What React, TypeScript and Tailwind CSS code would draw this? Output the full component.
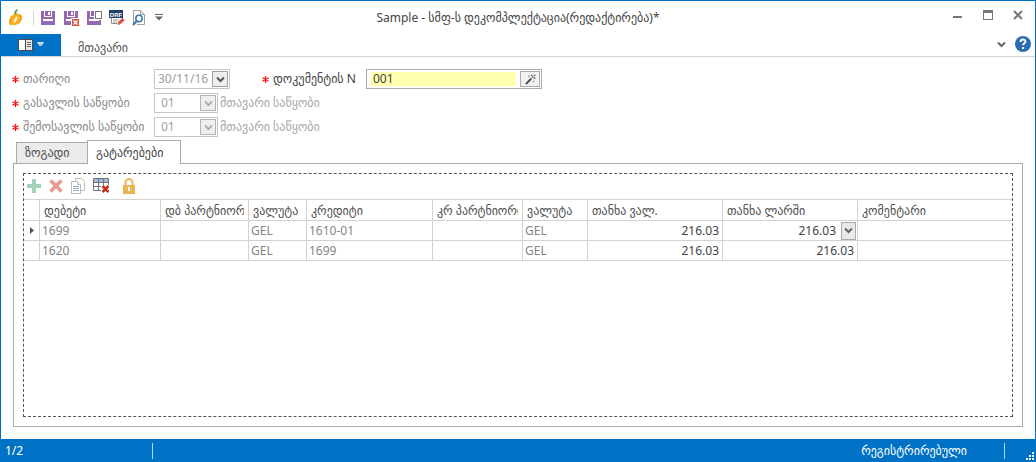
import type { ReactNode } from "react";

type Row = { debit: string; credit: string; amount: string; local: string; active?: boolean };

const rows: Row[] = [
  { debit: "1699", credit: "1610-01", amount: "216.03", local: "216.03", active: true },
  { debit: "1620", credit: "1699", amount: "216.03", local: "216.03" },
];

const columns = [
  "დებეტი",
  "დბ პარტნიორი",
  "ვალუტა",
  "კრედიტი",
  "კრ პარტნიორი",
  "ვალუტა",
  "თანხა ვალ.",
  "თანხა ლარში",
  "კომენტარი",
];

function Chevron({ className = "" }: { className?: string }) {
  return (
    <svg viewBox="0 0 9 7" className={`h-[7px] w-[9px] ${className}`} fill="none" stroke="currentColor" strokeWidth="2">
      <path d="M1 1.500 L4.500 5 L8 1.500" />
    </svg>
  );
}

function SaveIcon({ variant }: { variant?: "close" | "new" }) {
  return (
    <svg viewBox="0 0 16 16" className="size-4" shapeRendering="crispEdges">
      <path d="M1 1h14v14H1z" fill="#9468b0" />
      <path d="M4 1h8v6H4z" fill="#fff" />
      <path d="M5 1h6v5H5z" fill="#9468b0" />
      <path d="M8 2h2v3H8z" fill="#fff" />
      <path d="M3 9h10v2H3z" fill="#fff" />
      {variant === "close" && (
        <>
          <path d="M8 8h8v8H8z" fill="#fff" />
          <path d="M9 9h7v7H9z" fill="#d9553f" />
          <path d="M10.500 10.500l4 4M14.500 10.500l-4 4" stroke="#fff" strokeWidth="1.3" shapeRendering="auto" />
        </>
      )}
      {variant === "new" && (
        <>
          <path d="M8 0h8v10H8z" fill="#fff" />
          <path d="M9.500 1.500h6v7h-6z" fill="#fff" stroke="#777" />
        </>
      )}
    </svg>
  );
}

function LogoIcon() {
  return (
    <svg viewBox="0 0 14 17" className="h-[17px] w-[14px]">
      <path d="M6 5C3 5 1 9 1 13c0 3 3 3.500 5.500 3C10.500 15 13 11 13 8c0-3-4-4-7-3z" fill="#fbb11c" />
      <path d="M8 7.500c-2 1-3.200 3.600-3 6 2-.6 3.700-3 3-6z" fill="#fff" />
      <path d="M3 7C1 10 0 14 2 16M11 6c2 2 1 6-2 8.500" fill="none" stroke="#f59b13" strokeWidth="1.500" />
      <path d="M5 5.500C5 3 6 1 8 0l.8 1.500C7.500 2.500 7.300 3.500 7.500 5z" fill="#54a447" />
    </svg>
  );
}

function DraftIcon() {
  return (
    <svg viewBox="0 0 16 16" className="size-4">
      <path d="M2.500 7v6.500h6M13.500 7v3" fill="none" stroke="#8b8b8b" />
      <path d="M4 10h6M4 12h4" stroke="#999" />
      <path d="M0 0h14v8H0z" fill="#1d4167" />
      <text x="7" y="6.500" textAnchor="middle" fontSize="6" fontWeight="700" fill="#fff" fontFamily="Liberation Sans, sans-serif">DRF</text>
      <path d="M8 15l1-3 4.500-4 2.300 2.300L11 14.500z" fill="#d9553f" />
      <path d="M8 15l.7-2.300 1.600 1.600z" fill="#e9c99a" />
    </svg>
  );
}

function PreviewIcon() {
  return (
    <svg viewBox="0 0 14 16" className="h-4 w-[14px]" fill="none">
      <path d="M1.500 14.500v-14h7l4 4v10H5" stroke="#a0a0a0" />
      <path d="M8.500.5v4h4" stroke="#a0a0a0" />
      <circle cx="7" cy="8.500" r="3.200" fill="#fff" stroke="#3678b2" strokeWidth="1.500" />
      <path d="M4.700 11L1 15" stroke="#3678b2" strokeWidth="2" />
    </svg>
  );
}

function IconButton({ label, className = "", children }: { label: string; className?: string; children: ReactNode }) {
  return (
    <button type="button" aria-label={label} className={`flex items-center justify-center ${className}`}>
      {children}
    </button>
  );
}

function TitleBar() {
  return (
    <header className="grid h-[33px] grid-cols-[1fr_auto_1fr] items-center">
      <div className="flex items-center pl-2">
        <LogoIcon />
        <span className="mr-[6px] ml-[10px] h-[14px] w-px bg-[#d5d5d5]" />
        <div className="flex items-center gap-[7px]">
          <IconButton label="Save"><SaveIcon /></IconButton>
          <IconButton label="Save and close"><SaveIcon variant="close" /></IconButton>
          <IconButton label="Save and new"><SaveIcon variant="new" /></IconButton>
          <IconButton label="Draft"><DraftIcon /></IconButton>
          <IconButton label="Preview"><PreviewIcon /></IconButton>
          <IconButton label="Customize" className="ml-[2px]">
            <svg viewBox="0 0 8 7" className="h-[7px] w-2" fill="#666">
              <path d="M0 0h8v1H0zM0 2.500h8L4 6.500z" />
            </svg>
          </IconButton>
        </div>
      </div>
      <h1 className="text-[12px] text-[#444]">Sample - სმფ-ს დეკომპლექტაცია(რედაქტირება)*</h1>
      <div className="flex items-center justify-end gap-5 pr-3 pb-[6px] text-[#777]">
        <IconButton label="Minimize">
          <svg viewBox="0 0 10 10" className="size-[10px]"><path d="M0 6h9v2H0z" fill="currentColor" /></svg>
        </IconButton>
        <IconButton label="Maximize">
          <svg viewBox="0 0 10 10" className="size-[10px]" shapeRendering="crispEdges">
            <path d="M.5.5h9v9h-9z" fill="none" stroke="currentColor" /><path d="M0 0h10v3H0z" fill="currentColor" />
          </svg>
        </IconButton>
        <IconButton label="Close">
          <svg viewBox="0 0 10 10" className="size-[10px]"><path d="M1 1l8 8M9 1l-8 8" stroke="currentColor" strokeWidth="2" /></svg>
        </IconButton>
      </div>
    </header>
  );
}

function RibbonBar() {
  return (
    <nav className="flex h-[23px] items-stretch border-b border-[#d4d4d4]">
      <button type="button" aria-label="Application menu" className="flex w-[60px] items-center justify-center gap-1 bg-[#0072c6] pb-px text-white">
        <svg viewBox="0 0 15 12" className="h-3 w-[15px]" shapeRendering="crispEdges">
          <path d="M0 0h15v12H0z" fill="#4d4d4d" />
          <path d="M1 1h6v10H1z" fill="#fff" />
          <path d="M8 1h6v10H8z" fill="#e6e6e6" />
          <path d="M9 3h4v1H9zM9 5h4v1H9zM9 7h4v1H9z" fill="#666" />
        </svg>
        <svg viewBox="0 0 7 5" className="h-[5px] w-[7px]"><path d="M.7.7h5.600L3.500 4z" fill="#7fb9e3" stroke="#fff" /></svg>
      </button>
      <a href="#main" className="flex items-center px-[17px] pt-[6px] text-[12px] text-[#555]">მთავარი</a>
      <div className="ml-auto flex items-center gap-[9px] pr-1 pb-[2px] text-[#666]">
        <IconButton label="Collapse"><Chevron /></IconButton>
        <IconButton label="Help">
          <svg viewBox="0 0 16 16" className="size-4">
            <circle cx="8" cy="8" r="8" fill="#2a6db4" />
            <path d="M5.500 6c0-3.300 5-3.300 5-.4 0 1.800-2.400 1.700-2.400 3.700" fill="none" stroke="#fff" strokeWidth="1.900" />
            <path d="M7 11h2.100v2H7z" fill="#fff" />
          </svg>
        </IconButton>
      </div>
    </nav>
  );
}

function Label({ htmlFor, dark, children }: { htmlFor: string; dark?: boolean; children: ReactNode }) {
  return (
    <label htmlFor={htmlFor} className={`flex items-center gap-1 whitespace-nowrap ${dark ? "text-[#444]" : "text-[#8a8a8a]"}`}>
      <svg viewBox="0 0 7 7" className="size-[7px]" stroke="#ff1010" strokeWidth="1.300">
        <path d="M3.500 0v7M.5 1.700l6 3.600M6.500 1.700l-6 3.600" />
      </svg>
      {children}
    </label>
  );
}

function Warehouse({ id, label }: { id: string; label: string }) {
  return (
    <div className="flex h-5 items-center">
      <div className="w-[142px]"><Label htmlFor={id}>{label}</Label></div>
      <div className="grid h-5 w-16 items-center border border-[#c6c6c6]">
        <select id={id} disabled className="col-start-1 row-start-1 h-full w-full appearance-none pl-[6px] text-[#a0a0a0] opacity-100">
          <option>01</option>
        </select>
        <span className="pointer-events-none col-start-1 row-start-1 mr-px flex h-4 w-4 items-center justify-center justify-self-end border border-[#b4b4b4] bg-[#eee] text-[#b0b0b0]">
          <Chevron />
        </span>
      </div>
      <span className="ml-[2px] whitespace-nowrap text-[#a8a8a8]">მთავარი საწყობი</span>
    </div>
  );
}

function DocumentForm() {
  return (
    <form className="flex flex-col gap-1 pt-3 pl-[11px]">
      <div className="flex h-5 items-center">
        <div className="w-[142px]"><Label htmlFor="date">თარიღი</Label></div>
        <div className="flex h-5 w-[76px] items-center border border-[#c6c6c6] pr-px">
          <input id="date" defaultValue="30/11/16" className="w-full min-w-0 pl-[3px] text-[#a0a0a0]" />
          <IconButton label="Pick date" className="h-4 w-4 shrink-0 border border-[#a0a0a0] bg-[#eee] text-[#555]"><Chevron /></IconButton>
        </div>
        <div className="ml-8 w-[104px]"><Label htmlFor="number" dark>დოკუმენტის N</Label></div>
        <div className="flex h-5 w-44 items-center border border-[#ababab] pr-px pl-1">
          <input id="number" defaultValue="001" className="mr-1 h-[14px] w-full min-w-0 bg-[#ffffae] pl-[2px] text-[#444]" />
          <IconButton label="Generate number" className="h-4 w-5 shrink-0 border border-[#ababab] bg-[#f2f2f2]">
            <svg viewBox="0 0 12 12" className="size-[11px]" stroke="#555" fill="#555">
              <path d="M1 11l6-6" strokeWidth="2.200" />
              <path d="M7 1h1v1H7zM10 1h1v1h-1zM10 4h1v1h-1zM9 8h.6v.6H9zM4 2h.6v.6H4zM8 3h1v1H8z" strokeWidth=".6" />
            </svg>
          </IconButton>
        </div>
      </div>
      <Warehouse id="source" label="გასავლის საწყობი" />
      <Warehouse id="target" label="შემოსავლის საწყობი" />
    </form>
  );
}

function GridToolbar() {
  return (
    <div className="flex h-[25px] items-center gap-2 pb-[2px] pl-[3px]">
      <IconButton label="Add">
        <svg viewBox="0 0 14 14" className="size-[14px]"><path d="M5 0h4v5h5v4H9v5H5V9H0V5h5z" fill="#a3d4b8" /></svg>
      </IconButton>
      <IconButton label="Delete">
        <svg viewBox="0 0 14 14" className="size-[14px]"><path d="M1.500 1.500l11 11M12.500 1.500l-11 11" stroke="#e89b8e" strokeWidth="3.500" /></svg>
      </IconButton>
      <IconButton label="Copy">
        <svg viewBox="0 0 14 16" className="h-4 w-[14px]" fill="#fff" stroke="#bcbcbc">
          <path d="M4.500 12.500V.5h6l3 3v9z" /><path d="M.5 3.500h6l3 3v9h-9z" /><path d="M6.500 3.500v3h3" />
          <path d="M2 8.500h6M2 10.500h6M2 12.500h6" stroke="#8eb5d6" />
        </svg>
      </IconButton>
      <IconButton label="Clear table">
        <svg viewBox="0 0 17 15" className="h-[15px] w-[17px]">
          <path d="M.5 .5h15v12H.5z" fill="#fff" stroke="#747474" />
          <path d="M1 1h14v3H1z" fill="#9dbedd" />
          <path d="M.5 4.500h15M.5 8.500h15M5.500 0v12.500M10.500 0v12.500" stroke="#747474" fill="none" />
          <path d="M8 7h9v8H8z" fill="#fff" />
          <path d="M9.500 8l6 6M15.500 8l-6 6" stroke="#c6301a" strokeWidth="2.500" />
        </svg>
      </IconButton>
      <IconButton label="Lock" className="ml-[5px]">
        <svg viewBox="0 0 12 16" className="h-4 w-3">
          <path d="M2.500 8V4.500a3.500 3.500 0 0 1 7 0V8" fill="none" stroke="#e9b65c" strokeWidth="2" />
          <path d="M0 7h12v9H0z" fill="#e9b357" /><path d="M5 9h2v4H5z" fill="#fff" />
        </svg>
      </IconButton>
    </div>
  );
}

const cell = "border-r border-b border-[#d2d2d2] px-[2px]";
const amountCell = "border-r border-b border-[#d2d2d2] pr-[3px] pl-[2px] text-right text-[#444]";

function EntriesTable() {
  return (
    <table className="w-full table-fixed border-separate border-spacing-0 border-t border-[#d2d2d2]">
      <colgroup>
        <col className="w-[16px]" />
        <col className="w-[121px]" />
        <col className="w-[88px]" />
        <col className="w-[58px]" />
        <col className="w-[126px]" />
        <col className="w-[90px]" />
        <col className="w-[65px]" />
        <col className="w-[135px]" />
        <col className="w-[135px]" />
        <col />
      </colgroup>
      <thead>
        <tr className="h-[21px] text-left text-[#505050]">
          <td className={cell} />
          {columns.map((title, i) => (
            <th key={i} scope="col" className="border-r border-b border-[#d2d2d2] px-1 pt-[2px] font-normal last:border-r-0">
              <div className="h-4 overflow-hidden leading-4 whitespace-nowrap">{title}</div>
            </th>
          ))}
        </tr>
      </thead>
      <tbody>
        {rows.map((row) => (
          <tr key={row.debit} className="h-5 leading-4 text-[#858585]">
            <td className={cell}>
              {row.active && (
                <svg viewBox="0 0 4 7" className="mx-auto h-[7px] w-1" fill="#555"><path d="M0 0l4 3.500L0 7z" /></svg>
              )}
            </td>
            <td className={cell}>{row.debit}</td>
            <td className={cell} />
            <td className={cell}>GEL</td>
            <td className={cell}>{row.credit}</td>
            <td className={cell} />
            <td className={cell}>GEL</td>
            <td className={amountCell}>{row.amount}</td>
            <td className={amountCell}>
              {row.active ? (
                <div className="-mr-[2px] flex items-center justify-end gap-[5px]">
                  {row.local}
                  <IconButton label="Edit amount" className="h-[18px] w-[15px] border border-[#ababab] bg-[#e9e9e9] text-[#666]"><Chevron /></IconButton>
                </div>
              ) : (
                row.local
              )}
            </td>
            <td className="border-b border-[#d2d2d2]" />
          </tr>
        ))}
      </tbody>
    </table>
  );
}

function StatusBar() {
  return (
    <footer className="flex h-[23px] items-center bg-[#0072c6] text-white">
      <span className="w-[151px] pl-1">1/2</span>
      <span className="h-4 w-px bg-[#b9d9f0]" />
      <span className="ml-auto pr-[37px]">რეგისტრირებული</span>
      <span className="h-4 w-px bg-[#b9d9f0]" />
      <svg viewBox="0 0 8 8" className="mr-px mb-[2px] ml-[21px] size-2 self-end" fill="#fff" shapeRendering="crispEdges">
        <path d="M6 0h2v2H6zM3 3h2v2H3zM6 3h2v2H6zM0 6h2v2H0zM3 6h2v2H3zM6 6h2v2H6z" />
      </svg>
    </footer>
  );
}

export default function App() {
  return (
    <div className="flex min-h-screen flex-col border border-b-0 border-[#0072c6] bg-white font-['Noto_Sans','DejaVu_Sans',sans-serif] text-[12px] leading-4">
      <TitleBar />
      <RibbonBar />
      <DocumentForm />
      <main id="main" className="mt-[3px] flex flex-1 flex-col px-3 pb-3">
        <div role="tablist" className="flex items-end pl-[3px]">
          <button type="button" role="tab" aria-selected="false" className="h-[21px] w-[71px] border border-r-0 border-b-0 border-[#ababab] bg-[#ebebeb] pl-2 text-left text-[#505050]">
            ზოგადი
          </button>
          <button type="button" role="tab" aria-selected="true" className="relative z-10 -mb-px h-6 w-[94px] border border-b-0 border-[#ababab] bg-white pl-2 text-left text-[#444]">
            გატარებები
          </button>
        </div>
        <section className="flex flex-1 flex-col border border-[#ababab] p-[9px]">
          <div className="flex-1 border border-dashed border-[#555]">
            <GridToolbar />
            <EntriesTable />
          </div>
        </section>
      </main>
      <StatusBar />
    </div>
  );
}
